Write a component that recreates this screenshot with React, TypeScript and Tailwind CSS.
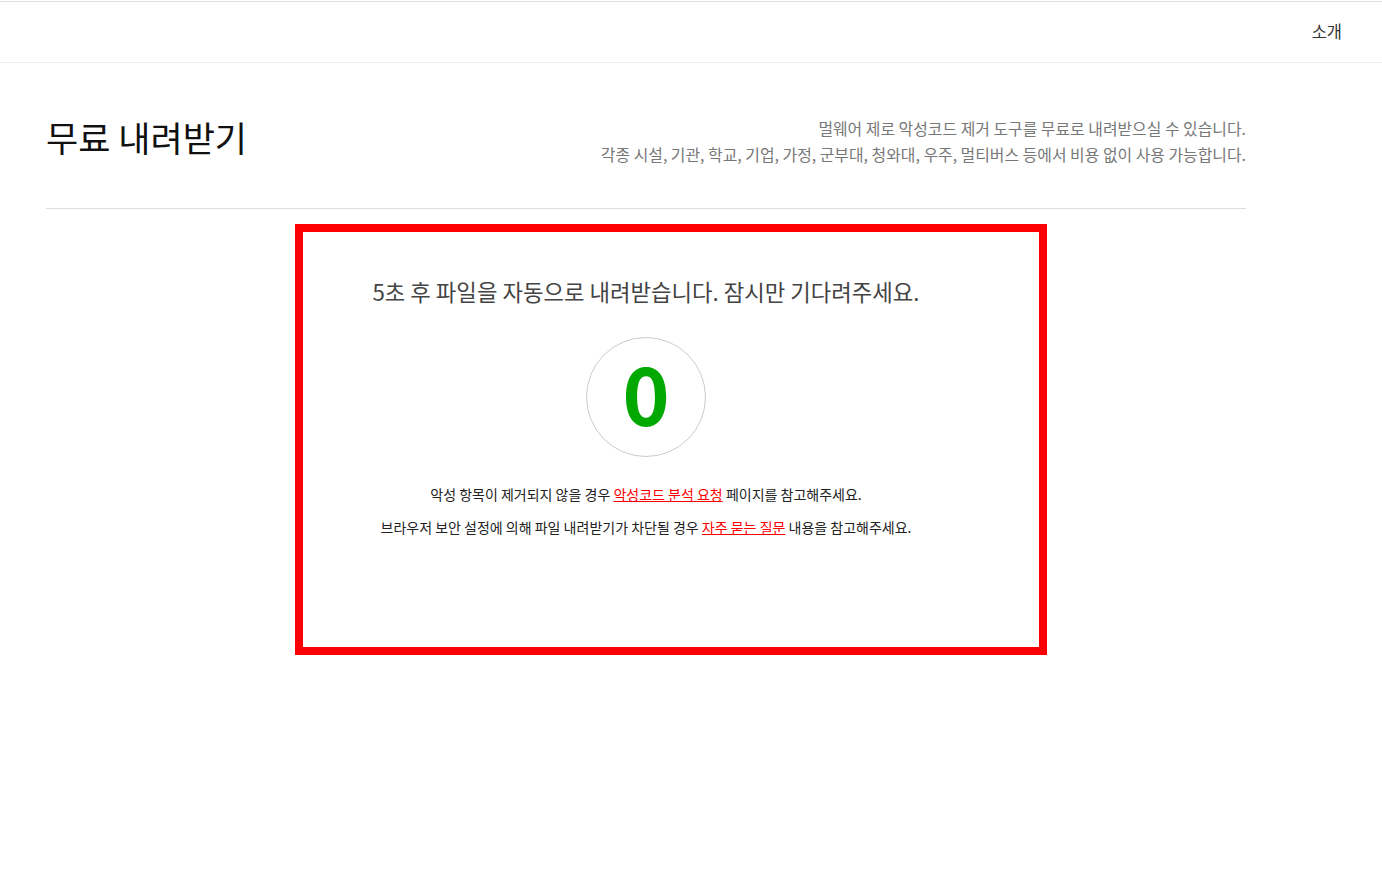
const font = { fontFamily: '"Noto Sans CJK KR", "Noto Sans", sans-serif' };

export default function App() {
  return (
    <div className="relative min-h-[895px] bg-white pt-px" style={font}>
      <header className="flex h-[62px] items-center justify-end border-t border-b border-t-[#dddddd] border-b-[#eeeeee] pr-10">
        <a href="#intro" className="mb-[2px] text-[16.5px] text-[#333333]">
          소개
        </a>
      </header>

      <main className="ml-[46px] w-[1200px]">
        <section className="flex h-[146px] items-start justify-between border-b border-[#dddddd] pt-[46px]">
          <h1 className="text-[35px] leading-[56px] font-normal text-[#111111]">무료 내려받기</h1>
          <div className="pt-[7px] text-right text-[15.9px] leading-[26px] text-[#777777]">
            <p>멀웨어 제로 악성코드 제거 도구를 무료로 내려받으실 수 있습니다.</p>
            <p>각종 시설, 기관, 학교, 기업, 가정, 군부대, 청와대, 우주, 멀티버스 등에서 비용 없이 사용 가능합니다.</p>
          </div>
        </section>

        <section className="flex flex-col items-center pt-[66px]">
          <h2 className="text-[22.3px] leading-[32px] font-normal text-[#444444]">
            5초 후 파일을 자동으로 내려받습니다. 잠시만 기다려주세요.
          </h2>
          <div className="mt-[30px] flex h-[120px] w-[120px] items-center justify-center rounded-full border border-[#cccccc]">
            <span className="mb-[12px] text-[80px] leading-none font-bold text-[#00a800]">0</span>
          </div>
          <div className="mt-[21px] text-center text-[14px] leading-[33px] text-[#222222]">
            <p>
              악성 항목이 제거되지 않을 경우{" "}
              <a href="#report" className="text-[#ff0000] underline">
                악성코드 분석 요청
              </a>{" "}
              페이지를 참고해주세요.
            </p>
            <p>
              브라우저 보안 설정에 의해 파일 내려받기가 차단될 경우{" "}
              <a href="#faq" className="text-[#ff0000] underline">
                자주 묻는 질문
              </a>{" "}
              내용을 참고해주세요.
            </p>
          </div>
        </section>
      </main>

      {/* highlight frame drawn over the download area */}
      <div className="pointer-events-none absolute top-[224px] left-[295px] h-[431px] w-[752px] border-8 border-[#ff0000]" />
    </div>
  );
}
